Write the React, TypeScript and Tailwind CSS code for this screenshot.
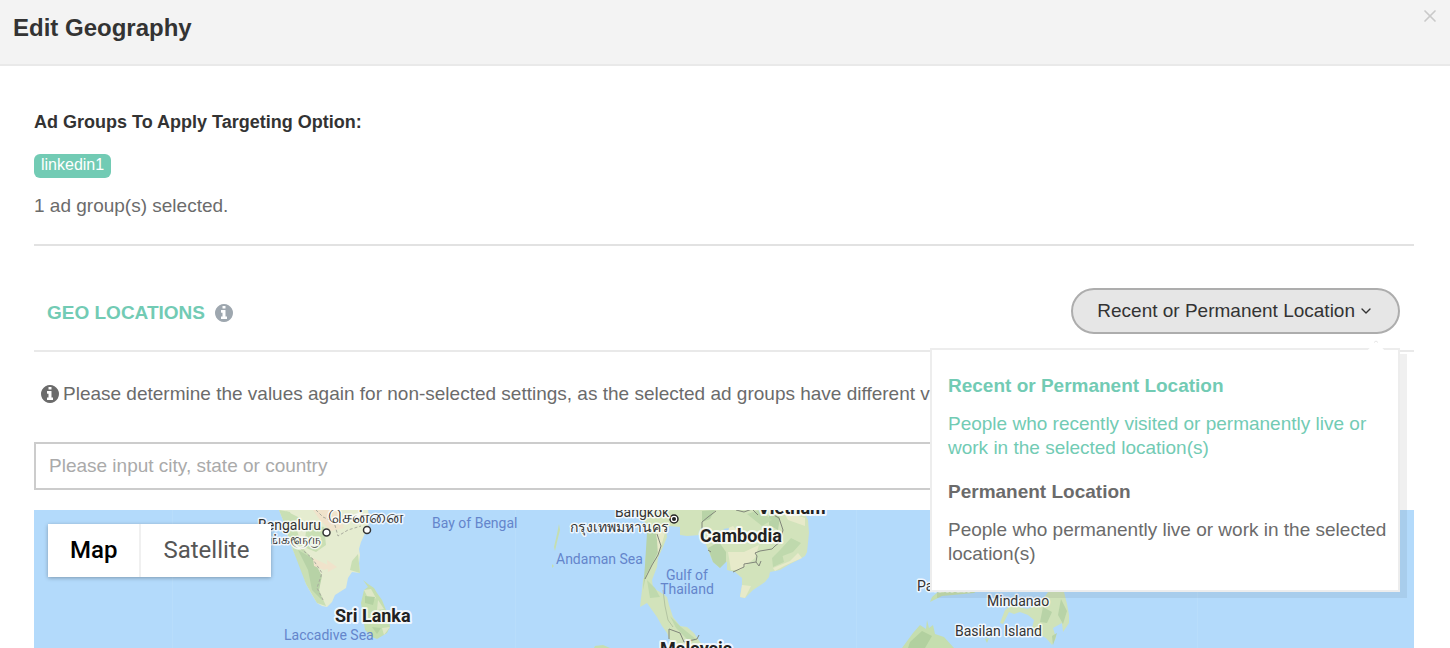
import { useState } from "react";
import { ChevronDown, X } from "lucide-react";

const locationOptions = [
  {
    title: "Recent or Permanent Location",
    description: "People who recently visited or permanently live or work in the selected location(s)",
  },
  {
    title: "Permanent Location",
    description: "People who permanently live or work in the selected location(s)",
  },
];

const InfoIcon = ({ className }: { className: string }) => (
  <svg className={`size-[18px] shrink-0 ${className}`} viewBox="128 128 1536 1536" fill="currentColor" aria-hidden="true">
    <path d="M1152 1376v-160q0-14-9-23t-23-9h-96v-512q0-14-9-23t-23-9h-320q-14 0-23 9t-9 23v160q0 14 9 23t23 9h96v320h-96q-14 0-23 9t-9 23v160q0 14 9 23t23 9h448q14 0 23-9t9-23zm-128-896v-160q0-14-9-23t-23-9h-192q-14 0-23 9t-9 23v160q0 14 9 23t23 9h192q14 0 23-9t9-23zm640 416q0 209-103 385.500t-279.500 279.500-385.500 103-385.500-103-279.500-279.500-103-385.500 103-385.500 279.500-279.500 385.500-103 385.500 103 279.500 279.500 103 385.500z" />
  </svg>
);

const MapCanvas = () => (
  <svg
    className="absolute inset-0 h-full w-full"
    viewBox="34 510 1380 138"
    preserveAspectRatio="xMinYMin slice"
    role="img"
    aria-label="Map of South and Southeast Asia"
  >
    {/* Tile seams */}
    <path d="M172.500 510V648M515.500 510V648M856.500 510V648M1197.500 510V648" stroke="#b8ddfb" />

    {/* India and Sri Lanka */}
    <path
      fill="#e5ecd0"
      d="M279 510L283 520L288 537L293 550L302 570L306 584L311 593L317 603L322 606L327 607L332 602L335 595L346 588L348 578L352 572L360 573L359 563L360 555L359 549L361 542L368 527L369 517L368 510Z"
    />
    <path fill="#c9dfb4" d="M279 510L290 512L295 525L303 548L316 564L321 576L319 590L326 606L317 603L306 584L293 550L283 520Z" />
    <path fill="#b7d2a6" d="M298 550L312 558L322 576L319 590L322 600L312 590L308 570Z" />
    <path fill="#c9dfb4" d="M352 561L358 554L360 573L350 570ZM307 524L324 527L326 545L316 552L304 547ZM286 511L300 518L291 522Z" />
    <path fill="#f0e3cb" d="M313 510L337 510L344 528L331 531L320 520ZM313 558L332 567L324 570L314 566ZM327 560L337 567L328 572Z" />
    <path
      fill="none"
      stroke="#a9ab9e"
      strokeDasharray="3 2"
      d="M316 510L323 517L334 522L338 536L348 530L361 526M300 548L312 558L322 573L317 588L323 600"
    />
    <path
      fill="#c5deaf"
      d="M363 580L368 584L374 588L377 593L382 600L388 615L390 627L387 633L382 636L377 639L372 637L365 630L363 617L361 603L364 590L368 587Z"
    />
    <path fill="#dfe8c8" d="M364 590L371 589L376 598L370 602ZM378 600L384 609L377 610ZM382 628L390 627L384 635Z" />
    <path fill="#b4d2a2" d="M365 596L375 597L373 605L365 603ZM372 627L381 628L377 634Z" />

    {/* Andaman islands and the tip of Sumatra */}
    <path fill="#c5deaf" d="M559 524L560 530L557 542L555 551L554 547L557 534ZM552 564L554 566L552 568Z" />
    <path fill="#c5deaf" d="M595 646L603 645L610 648H594Z" />

    {/* Thailand, Malay peninsula, Cambodia and Vietnam */}
    <path
      fill="#d2e3bb"
      d="M636 510L645 522L647 533L647 550L645 560L647 567L643 580L642 590L640 607L647 603L657 617L662 626L667 633L673 648H708L700 642L694 633L687 627L680 626L673 617L669 605L667 597L660 592L653 588L652 580L657 567L658 558L663 547L667 537L666 530L669 526L680 527L680 535L687 536L700 535L705 542L708 550L713 562L720 568L722 561L727 562L727 570L735 572L742 578L742 585L740 597L745 598L753 590L765 582L769 577L770 572L780 570L790 564L800 559L805 556L807 552L809 533L808 520L803 510Z"
    />
    <path fill="#b8d3a7" d="M647 533L655 530L661 546L653 562L646 575L643 590L645 565ZM708 548L719 542L726 552L726 562L720 568L713 562ZM702 511L715 510L710 519L702 522ZM769 512L780 517L778 530L769 525Z" />
    <path fill="#bfd9ad" d="M780 550L791 538L801 543L793 552L780 557ZM772 558L781 549L784 562L773 567ZM747 514L760 510L772 520L762 526ZM647 580L655 588L660 597L650 598ZM670 616L681 627L697 640L690 642L676 628Z" />
    <path fill="#e7eaca" d="M728 552L744 552L759 545L755 558L740 570L731 570ZM773 568L790 561L798 553L802 558L784 566L775 571ZM655 529L667 525L663 540L658 555L657 540ZM742 585L751 586L745 598L740 597ZM783 511L805 518L805 526L788 520ZM724 530L733 526L740 534L729 542Z" />
    <path fill="#add5f5" d="M723 529L729 528L728 532Z" />
    <path
      fill="none"
      stroke="#81867a"
      d="M657 534L661 546L658 555L652 565L645 579M733 572L744 567L744 564L756 562L757 556L755 553L760 551L772 549L775 546L780 542M780 542L783 530L779 518L770 513M756 562L759 566L761 561M702 537L702 522L708 517L716 511M708 550L711 552M736 510L744 512L752 509L758 515M669 639L669 629L680 633L684 642L697 639L699 635"
    />
    <path fill="none" stroke="#b3c4a2" d="M663 590L665 606L668 620L673 627" />

    {/* Philippines */}
    <path fill="#c5deaf" d="M930 602L932 597L938 592L978 590L974 593L942 596Z" />
    <path
      fill="#cfe2b9"
      d="M1064 592L1067 604L1069 615L1069 623L1063 632L1062 623L1053 628L1056 638L1052 645L1046 638L1037 633L1032 628L1034 620L1028 615L1020 612L1014 614L1009 612L1003 624L1000 623L1005 610L1012 605L1027 609L1040 604L1048 592Z"
    />
    <path fill="#b8d3a7" d="M1043 607L1052 612L1047 623L1040 622ZM1061 599L1067 611L1063 624L1058 615ZM1052 636L1057 633L1053 645Z" />
    <path fill="#c5deaf" d="M985 639L989 638L987 643Z" />

    {/* Borneo */}
    <path fill="#c5deaf" d="M902 648L913 633L920 625L926 629L927 620L929 628L933 625L935 634L944 637L954 648Z" />
    <path fill="#b2d09f" d="M910 642L922 631L932 636L925 648H908Z" />

    {/* City markers */}
    <circle cx="326.500" cy="532.500" r="3.500" fill="#fff" stroke="#333" strokeWidth="1.500" />
    <circle cx="367" cy="530" r="3.500" fill="#fff" stroke="#333" strokeWidth="1.500" />
    <circle cx="674" cy="519" r="4" fill="#fff" stroke="#222" strokeWidth="1.500" />
    <circle cx="674" cy="519" r="2" fill="#222" />

    {/* Water labels */}
    <g fill="#6485cb" fontFamily="Roboto, sans-serif" fontSize="14">
      <text x="432" y="528">Bay of Bengal</text>
      <text x="556" y="564">Andaman Sea</text>
      <text x="284" y="640">Laccadive Sea</text>
      <text x="687" y="580" textAnchor="middle">Gulf of</text>
      <text x="687" y="594" textAnchor="middle">Thailand</text>
    </g>

    {/* City and island labels */}
    <g
      fill="#333"
      stroke="#fff"
      strokeOpacity="0.8"
      strokeWidth="3"
      strokeLinejoin="round"
      paintOrder="stroke"
      fontFamily="Roboto, 'Noto Sans', sans-serif"
      fontSize="14"
    >
      <text x="321" y="544" textAnchor="end">பெங்களூரு</text>
      <text x="321" y="530" textAnchor="end">Bengaluru</text>
      <text x="328" y="523" fontSize="18">சென்னை</text>
      <text x="669" y="532" textAnchor="end">กรุงเทพมหานคร</text>
      <text x="669" y="517" textAnchor="end">Bangkok</text>
      <text x="917" y="591">Palawan</text>
      <text x="987" y="606">Mindanao</text>
      <text x="955" y="636">Basilan Island</text>
    </g>

    {/* Country labels */}
    <g
      fill="#222"
      stroke="#fff"
      strokeOpacity="0.8"
      strokeWidth="4"
      strokeLinejoin="round"
      paintOrder="stroke"
      fontFamily="Roboto, sans-serif"
      fontSize="18"
      fontWeight="700"
    >
      <text x="335" y="622">Sri Lanka</text>
      <text x="700" y="542">Cambodia</text>
      <text x="758" y="514">Vietnam</text>
      <text x="660" y="655">Malaysia</text>
    </g>
  </svg>
);

const App = () => {
  const [selected, setSelected] = useState(0);
  const [open, setOpen] = useState(true);
  const [mapType, setMapType] = useState("Map");

  return (
    <div className="flex h-screen flex-col overflow-hidden bg-white font-['Liberation_Sans',Arial,sans-serif] text-[19px] leading-6 text-[#6b6b6b]">
      {/* Header */}
      <header className="flex h-[66px] shrink-0 items-start justify-between border-b-2 border-[#e9e9e9] bg-[#f3f3f3] pr-[10px] pl-[13px]">
        <h1 className="mt-4 text-2xl leading-6 font-bold text-[#333]">Edit Geography</h1>
        <button type="button" aria-label="Close" className="mt-[6px] text-[#c9c9c9]">
          <X className="size-5" strokeWidth={2} />
        </button>
      </header>

      <main className="flex min-h-0 flex-1 flex-col pt-11 pr-9 pl-[34px]">
        {/* Ad groups */}
        <section className="shrink-0 border-b-2 border-[#e2e2e2] pb-[26px]">
          <h2 className="text-lg leading-6 font-bold text-[#333]">Ad Groups To Apply Targeting Option:</h2>
          <span className="mt-5 block w-fit rounded-md bg-[#72cbb4] px-[7px] pb-[2px] text-base leading-[22px] text-white">
            linkedin1
          </span>
          <p className="mt-4">1 ad group(s) selected.</p>
        </section>

        {/* Geo locations */}
        <section className="flex min-h-0 flex-1 flex-col">
          <div className="mt-[42px] flex shrink-0 items-center justify-between border-b-2 border-[#e9e9e9] pr-[14px] pb-4 pl-[13px]">
            <h2 className="flex items-center gap-[10px] pt-1 font-bold text-[#72cbb4]">
              GEO LOCATIONS
              <InfoIcon className="text-[#9ea7af]" />
            </h2>

            <div className="relative">
              <button
                type="button"
                aria-expanded={open}
                onClick={() => setOpen(!open)}
                className="flex h-[46px] items-center gap-[3px] rounded-full border-2 border-[#adadad] bg-[#e6e6e6] px-6 text-[#333]"
              >
                Recent or Permanent Location
                <ChevronDown className="size-4" strokeWidth={2} />
              </button>

              {open && (
                <div className="absolute top-full right-0 z-20 mt-[14px] flex w-[470px] flex-col gap-5 border-2 border-[#ededed] bg-white py-6 pr-2 pl-4 shadow-[7px_6px_0_rgba(0,0,0,0.06)]">
                  <svg className="absolute -top-[10px] right-3 h-3 w-5" viewBox="0 0 20 12">
                    <path d="M0 12L10 1L20 12Z" fill="#fff" />
                    <path d="M8 2.500L10 1L12 2.500" fill="none" stroke="#e6e6e6" />
                  </svg>
                  {locationOptions.map((option, index) => (
                    <button
                      key={option.title}
                      type="button"
                      onClick={() => setSelected(index)}
                      className={`flex flex-col gap-[14px] text-left ${index === selected ? "text-[#72cbb4]" : "text-[#6b6b6b]"}`}
                    >
                      <strong>{option.title}</strong>
                      <span>{option.description}</span>
                    </button>
                  ))}
                </div>
              )}
            </div>
          </div>

          <p className="mt-[30px] flex shrink-0 items-center gap-1 pl-[7px]">
            <InfoIcon className="text-[#6b6b6b]" />
            Please determine the values again for non-selected settings, as the selected ad groups have different values.
          </p>

          <div className="mt-9 shrink-0 pr-6">
            <input
              type="text"
              aria-label="Location"
              placeholder="Please input city, state or country"
              className="block h-12 w-full border-2 border-[#ccc] px-[13px] placeholder:text-[#aaa]"
            />
          </div>

          {/* Map */}
          <div className="relative mt-5 min-h-0 flex-1 overflow-hidden bg-[#b3dafb]">
            <MapCanvas />
            <div className="absolute top-[14px] left-[14px] flex bg-white font-[Roboto,sans-serif] text-2xl shadow-[0_1px_4px_rgba(0,0,0,0.3)]">
              {["Map", "Satellite"].map((type) => (
                <button
                  key={type}
                  type="button"
                  onClick={() => setMapType(type)}
                  className={`h-[53px] px-[22px] pb-[2px] not-first:border-l-2 not-first:border-[#f0f0f0] ${
                    type === mapType ? "font-medium text-black" : "text-[#565656]"
                  }`}
                >
                  {type}
                </button>
              ))}
            </div>
          </div>
        </section>
      </main>
    </div>
  );
};

export default App;
